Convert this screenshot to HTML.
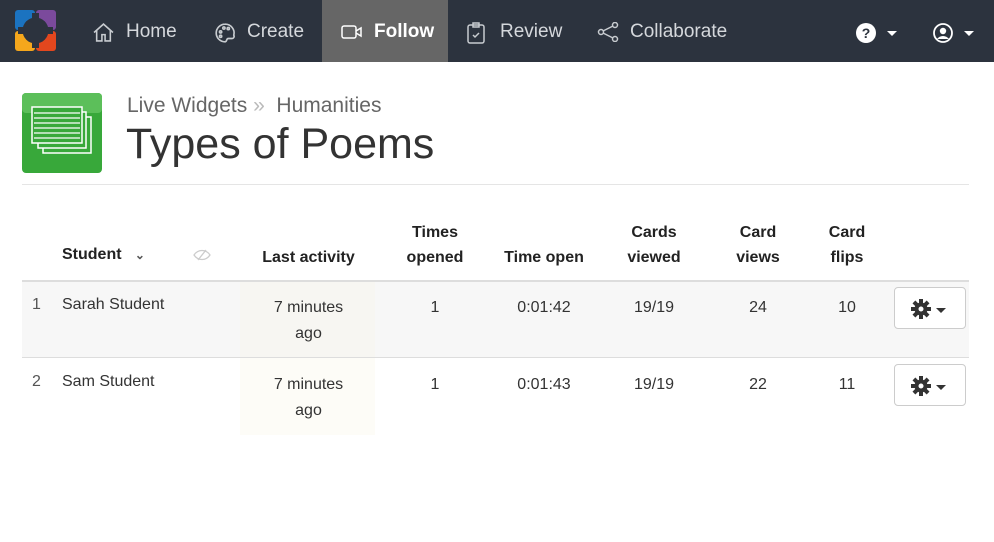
<!DOCTYPE html><html><head><style>
body{margin:0;width:994px;height:542px;background:#fff;font-family:"Liberation Sans",sans-serif;position:relative;overflow:hidden;color:#333}
.nav{position:absolute;left:0;top:0;width:994px;height:62px;background:#2c333e}
.ni{position:absolute;top:0;height:62px;line-height:64px;color:#d5d8dc;font-size:19px}
.ni svg{position:absolute;top:22px}
.a{position:absolute}
.th{position:absolute;font-weight:bold;font-size:16px;text-align:center;color:#222;line-height:25px}
.td{position:absolute;font-size:16px;text-align:center;color:#333;line-height:26px}
.btn{position:absolute;left:894px;width:70px;height:40px;border:1px solid #ccc;border-radius:4px;background:#fff}
</style></head><body>
<div class="nav">
<svg class="a" style="left:15px;top:10px" width="41" height="41" viewBox="0 0 41 41"><rect x="0" y="0" width="20" height="20" rx="3" fill="#1b73c0"/><rect x="21" y="0" width="20" height="20" rx="3" fill="#7b4a9c"/><rect x="0" y="21" width="20" height="20" rx="3" fill="#f5a71c"/><rect x="21" y="21" width="20" height="20" rx="3" fill="#e3471e"/><circle cx="20.5" cy="20.5" r="13" fill="#2c333e"/><g fill="#2c333e"><rect x="17" y="3" width="7" height="6"/><rect x="17" y="32" width="7" height="6"/><rect x="3" y="17" width="6" height="7"/><rect x="32" y="17" width="6" height="7"/></g></svg>
<div class="ni" style="left:93px"><svg width="21" height="21" viewBox="0 0 20 20" fill="none" stroke="#c8ccd0" stroke-width="1.5"><path d="M1 10L10 2l9 8M3.5 8v10h5v-6h3v6h5V8"/></svg><span style="margin-left:33px">Home</span></div>
<div class="ni" style="left:214px"><svg width="22" height="22" viewBox="0 0 20 20" fill="none" stroke="#c8ccd0" stroke-width="1.5"><path d="M10 2a8 8 0 1 0 0 16c2 0 1-3 3-3h3a2 2 0 0 0 2-3A8 8 0 0 0 10 2z"/><circle cx="6" cy="9" r="1"/><circle cx="9" cy="5.5" r="1"/><circle cx="13" cy="6" r="1"/><circle cx="6" cy="13" r="1"/></svg><span style="margin-left:33px">Create</span></div>
<div class="ni" style="left:322px;width:126px;background:#666;color:#fff;font-weight:bold"><svg style="left:19px;top:24px" width="22" height="16" viewBox="0 0 22 16" fill="none" stroke="#fff" stroke-width="1.5"><rect x="1" y="2" width="14" height="12" rx="2"/><path d="M15 7l5-3v8l-5-3"/></svg><span style="margin-left:52px">Follow</span></div>
<div class="ni" style="left:467px"><svg width="18" height="22" viewBox="0 0 18 22" fill="none" stroke="#c8ccd0" stroke-width="1.5"><rect x="1" y="3" width="16" height="18" rx="2"/><rect x="6" y="1" width="6" height="4"/><path d="M6 13l2 2 4-4"/></svg><span style="margin-left:33px">Review</span></div>
<div class="ni" style="left:597px"><svg width="22" height="20" viewBox="0 0 22 20" fill="none" stroke="#c8ccd0" stroke-width="1.5"><circle cx="4" cy="10" r="2.5"/><circle cx="18" cy="3" r="2.5"/><circle cx="18" cy="17" r="2.5"/><path d="M6 9l10-5M6 11l10 5"/></svg><span style="margin-left:33px">Collaborate</span></div>
<svg class="a" style="left:856px;top:23px" width="42" height="20"><circle cx="10" cy="10" r="10" fill="#fff"/><text x="10" y="15" font-size="14" font-weight="bold" text-anchor="middle" fill="#2c333e" font-family="Liberation Sans">?</text><path d="M31 8h10l-5 5z" fill="#fff"/></svg>
<svg class="a" style="left:933px;top:23px" width="42" height="20"><circle cx="10" cy="10" r="9" fill="none" stroke="#fff" stroke-width="1.8"/><circle cx="10" cy="8" r="3.2" fill="#fff"/><path d="M4 16c3-4 9-4 12 0" fill="#fff"/><path d="M31 8h10l-5 5z" fill="#fff"/></svg>
</div>
<svg class="a" style="left:22px;top:93px" width="80" height="80" viewBox="0 0 80 80"><rect width="80" height="80" rx="4" fill="#38a83a"/><rect width="80" height="20" rx="4" fill="#5cbf5a"/><g fill="#38a83a" stroke="#fff" stroke-width="1.5"><rect x="21" y="24" width="48" height="36"/><rect x="16" y="19" width="48" height="36"/><rect x="10" y="14" width="50" height="36"/></g><g stroke="#fff" stroke-width="1.2"><path d="M12 20h46M12 25h46M12 30h46M12 35h46M12 40h46M12 45h46"/></g></svg>
<div class="a" style="left:127px;top:94px;font-size:21px;color:#666">Live Widgets <span style="color:#bbb">»</span> &nbsp;Humanities</div>
<div class="a" style="left:126px;top:120px;font-size:43px;color:#333">Types of Poems</div>
<div class="a" style="left:22px;top:184px;width:947px;height:1px;background:#e5e5e5"></div>
<div class="a" style="left:240px;top:282px;width:135px;height:153px;background:#fdfcf7"></div>
<div class="a" style="left:22px;top:282px;width:947px;height:76px;background:#f7f7f7"></div>
<div class="a" style="left:240px;top:282px;width:135px;height:76px;background:#f7f6f2"></div>
<div class="a" style="left:22px;top:280px;width:947px;height:2px;background:#ddd"></div>
<div class="a" style="left:22px;top:357px;width:947px;height:1px;background:#ddd"></div>
<div class="th" style="left:62px;top:242px;text-align:left">Student &nbsp;&nbsp;<span style="font-size:12px;color:#555">&#8964;</span></div>
<svg class="a" style="left:193px;top:249px" width="18" height="12"><path d="M1 6c4-6 12-6 16 0c-4 6-12 6-16 0z" fill="none" stroke="#ccc" stroke-width="1.3"/><path d="M5 11L13 1" stroke="#ccc" stroke-width="1.3"/></svg>
<div class="th" style="left:240px;width:137px;top:245px">Last activity</div>
<div class="th" style="left:395px;width:80px;top:220px">Times<br>opened</div>
<div class="th" style="left:494px;width:100px;top:245px">Time open</div>
<div class="th" style="left:614px;width:80px;top:220px">Cards<br>viewed</div>
<div class="th" style="left:718px;width:80px;top:220px">Card<br>views</div>
<div class="th" style="left:807px;width:80px;top:220px">Card<br>flips</div>
<div class="td" style="left:32px;top:292px;color:#555">1</div>
<div class="td" style="left:62px;top:292px;text-align:left">Sarah Student</div>
<div class="td" style="left:240px;width:137px;top:295px">7 minutes<br>ago</div>
<div class="td" style="left:395px;width:80px;top:295px">1</div>
<div class="td" style="left:494px;width:100px;top:295px">0:01:42</div>
<div class="td" style="left:614px;width:80px;top:295px">19/19</div>
<div class="td" style="left:718px;width:80px;top:295px">24</div>
<div class="td" style="left:807px;width:80px;top:295px">10</div>
<div class="td" style="left:32px;top:369px;color:#555">2</div>
<div class="td" style="left:62px;top:369px;text-align:left">Sam Student</div>
<div class="td" style="left:240px;width:137px;top:372px">7 minutes<br>ago</div>
<div class="td" style="left:395px;width:80px;top:372px">1</div>
<div class="td" style="left:494px;width:100px;top:372px">0:01:43</div>
<div class="td" style="left:614px;width:80px;top:372px">19/19</div>
<div class="td" style="left:718px;width:80px;top:372px">22</div>
<div class="td" style="left:807px;width:80px;top:372px">11</div>
<div class="btn" style="top:287px"><svg class="a" style="left:16px;top:11px" width="40" height="20"><g transform="translate(10,10)" fill="#333"><circle r="6.5"/><g><rect x="-2" y="-10" width="4" height="20"/><rect x="-10" y="-2" width="20" height="4"/><rect x="-2" y="-10" width="4" height="20" transform="rotate(45)"/><rect x="-2" y="-10" width="4" height="20" transform="rotate(-45)"/></g><circle r="2.5" fill="#fff"/></g><path d="M25 9h10l-5 5z" fill="#333"/></svg></div>
<div class="btn" style="top:364px"><svg class="a" style="left:16px;top:11px" width="40" height="20"><g transform="translate(10,10)" fill="#333"><circle r="6.5"/><g><rect x="-2" y="-10" width="4" height="20"/><rect x="-10" y="-2" width="20" height="4"/><rect x="-2" y="-10" width="4" height="20" transform="rotate(45)"/><rect x="-2" y="-10" width="4" height="20" transform="rotate(-45)"/></g><circle r="2.5" fill="#fff"/></g><path d="M25 9h10l-5 5z" fill="#333"/></svg></div>
</body></html>
